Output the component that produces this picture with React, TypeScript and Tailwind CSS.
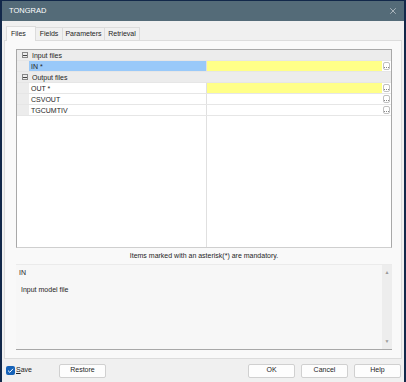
import { X } from 'lucide-react'

const font = { fontFamily: '"Liberation Sans", Arial, sans-serif' }

function Row({ name, value, selected, required }: { name: string; value?: string; selected?: boolean; required?: boolean }) {
  return (
    <div className="flex h-[11px] border-b border-[#e6e6e6]">
      <div className="w-[12px] bg-[#ececec]" />
      <div className={`w-[177px] pl-[2px] leading-[11px] ${selected ? 'bg-[#99c9f9]' : 'bg-white'}`}>{name}</div>
      <div className="flex flex-1 border-l border-[#e0e0e0]">
        <div className={`flex-1 ${required ? 'bg-[#ffff88]' : 'bg-white'}`}>{value}</div>
        <div className="w-[9px] flex items-center justify-center bg-white">
          <div className="w-[7px] h-[8px] rounded-[2px] border border-[#c0c0c0] flex items-end justify-center pb-px gap-px">
            <div className="w-px h-px bg-[#888]" />
            <div className="w-px h-px bg-[#888]" />
            <div className="w-px h-px bg-[#888]" />
          </div>
        </div>
      </div>
    </div>
  )
}

function Group({ title }: { title: string }) {
  return (
    <div className="flex h-[11px] items-center bg-[#ececec] border-b border-[#e6e6e6]">
      <div className="w-[15px] flex justify-center">
        <div className="w-[6px] h-[6px] border border-[#888] flex items-center justify-center">
          <div className="w-[4px] h-px bg-[#444]" />
        </div>
      </div>
      <div className="leading-[11px]">{title}</div>
    </div>
  )
}

export default function App() {
  return (
    <div className="w-[406px] h-[382px] bg-[#12284a] px-[2px] pt-px flex flex-col text-[7px] text-[#1e1e1e]" style={font}>
      {/* title bar */}
      <div className="h-[20px] bg-[#546b78] flex items-center justify-between pl-[7px] pr-[6px] text-white text-[7.5px]">
        <span>TONGRAD</span>
        <X size={10} strokeWidth={1.2} />
      </div>

      <div className="flex-1 bg-[#f0f0f0] flex flex-col">
        {/* tabs */}
        <div className="flex pl-[4px] pt-[5px] h-[19px] items-end">
          <div className="h-[15px] w-[30px] pl-[4px] bg-[#f9f9f9] border border-b-0 border-[#dcdcdc] flex items-center relative top-px z-10">Files</div>
          <div className="h-[13px] w-[27px] justify-center border border-b-0 border-l-0 border-[#dcdcdc] flex items-center">Fields</div>
          <div className="h-[13px] w-[42px] justify-center border border-b-0 border-l-0 border-[#dcdcdc] flex items-center">Parameters</div>
          <div className="h-[13px] w-[35px] justify-center border border-b-0 border-l-0 border-[#dcdcdc] flex items-center">Retrieval</div>
        </div>

        {/* panel */}
        <div className="mx-[2px] h-[319px] bg-[#f9f9f9] border border-[#dcdcdc] flex flex-col pl-[11px] pr-[9px] pt-[8px]">
          <div className="h-[199px] bg-white border border-[#a8a8a8] border-b-[#cfcfcf] flex flex-col relative">
            <Group title="Input files" />
            <Row name="IN *" selected required />
            <Group title="Output files" />
            <Row name="OUT *" required />
            <Row name="CSVOUT" />
            <Row name="TGCUMTIV" />
            <div className="flex-1 flex">
              <div className="w-[189px]" />
              <div className="border-l border-[#e0e0e0] flex-1" />
            </div>
          </div>

          <div className="h-[16px] flex items-center justify-center">Items marked with an asterisk(*) are mandatory.</div>

          <div className="h-[86px] bg-[#f7f7f7] border-t border-[#ebebeb] border-b border-b-[#a8a8a8] flex">
            <div className="flex-1 pl-[3px] pt-[3px]">
              <div>IN</div>
              <div className="mt-[6px] pl-[2px]">Input model file</div>
            </div>
            <div className="w-[10px] bg-[#ededed] flex flex-col items-center justify-between py-[4px] text-[#9a9a9a] text-[5px]">
              <span>▲</span>
              <span>▼</span>
            </div>
          </div>
        </div>

        {/* bottom bar */}
        <div className="flex-1 flex items-center pl-[4px] pr-[3px]">
          <div className="w-[9px] h-[9px] rounded-[2px] bg-[#1662b8] flex items-center justify-center">
            <svg width="7" height="7" viewBox="0 0 7 7"><path d="M1 3.6 L2.8 5.3 L6 1.8" stroke="white" strokeWidth="1" fill="none" /></svg>
          </div>
          <span className="ml-[1px]"><u>S</u>ave</span>
          <button className="ml-[27px] w-[47px] h-[14px] bg-[#fdfdfd] border border-[#d0d0d0] rounded-[2px]">Restore</button>
          <div className="flex-1" />
          <button className="w-[47px] h-[14px] bg-[#fdfdfd] border border-[#d0d0d0] rounded-[2px]">OK</button>
          <button className="ml-[6px] w-[47px] h-[14px] bg-[#fdfdfd] border border-[#d0d0d0] rounded-[2px]">Cancel</button>
          <button className="ml-[6px] w-[47px] h-[14px] bg-[#fdfdfd] border border-[#d0d0d0] rounded-[2px]">Help</button>
        </div>
      </div>
    </div>
  )
}
